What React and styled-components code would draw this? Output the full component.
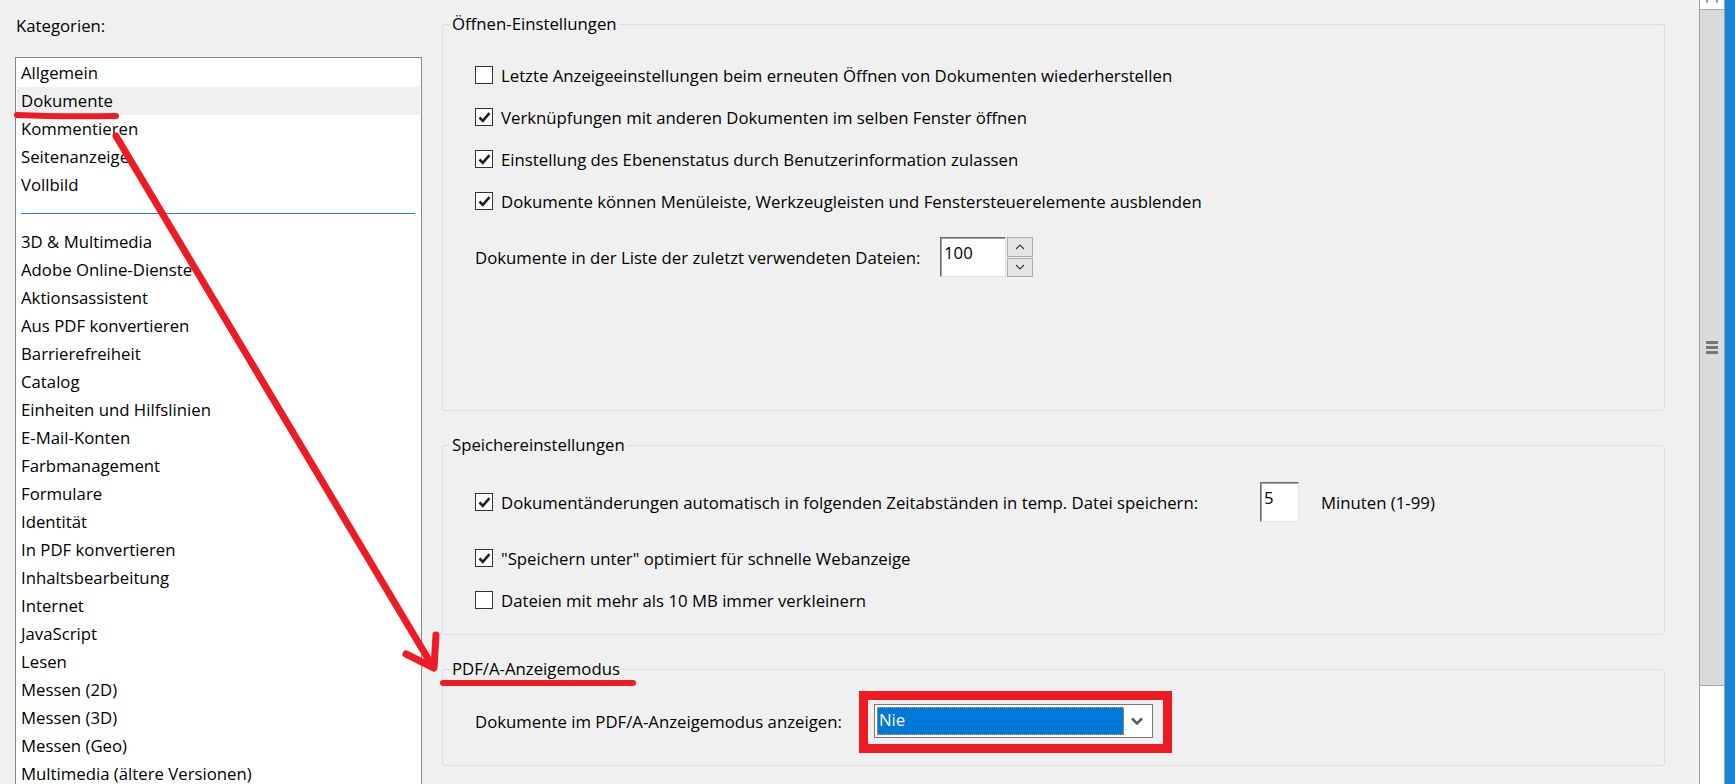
import React from 'react'
import styled, { createGlobalStyle } from 'styled-components'

const GlobalStyle = createGlobalStyle`
  html, body {
    margin: 0;
    padding: 0;
    overflow: hidden;
  }
  body {
    background: #f0f0f0;
    font-family: "Segoe UI", "Open Sans", "Noto Sans", sans-serif;
    font-size: 16.75px;
    color: #000;
  }
`

const Window = styled.div`
  position: relative;
  display: flex;
  width: 1735px;
  height: 784px;
  overflow: hidden;
  background: #f0f0f0;
`

/* left column: category list */
const Sidebar = styled.div`
  flex: none;
  width: 422px;
  padding: 14px 0 0 15px;
  box-sizing: border-box;
  display: flex;
  flex-direction: column;
`

const SidebarLabel = styled.div`
  height: 24px;
  line-height: 24px;
  padding-left: 1px;
  margin-bottom: 19px;
`

const CategoryList = styled.ul`
  flex: 1;
  min-height: 0;
  margin: 0;
  padding: 1px 1px 0;
  list-style: none;
  background: #fff;
  border: 1px solid #828790;
  border-bottom: none;
  overflow: hidden;
`

const Category = styled.li`
  height: 28px;
  line-height: 28px;
  padding-left: 4px;
  white-space: nowrap;
  background: ${p => (p.$selected ? '#f0f0f0' : 'transparent')};
`

const Divider = styled.li`
  height: 29px;
  display: flex;
  align-items: center;
  padding: 0 5px 0 4px;

  &::after {
    content: '';
    flex: 1;
    height: 1px;
    background: #2f7bc4;
  }
`

/* right column: option groups */
const Settings = styled.div`
  flex: 1;
  min-width: 0;
  padding: 12px 34px 0 20px;
  display: flex;
  flex-direction: column;
  gap: 22px;
`

const GroupBox = styled.fieldset`
  margin: 0;
  padding: 0;
  min-width: 0;
  height: ${p => p.$height}px;
  box-sizing: border-box;
  border: 1px solid #d5dfe5;
  border-radius: 3px;
`

const GroupTitle = styled.legend`
  margin-left: 7px;
  padding: 0 2px;
  line-height: 24px;
`

const GroupBody = styled.div`
  padding: ${p => p.$top}px 0 0 32px;
  display: flex;
  flex-direction: column;
`

const Row = styled.div`
  display: flex;
  align-items: center;
  height: 42px;
  margin-top: ${p => p.$space || 0}px;
  white-space: nowrap;
`

const Box = styled.span`
  flex: none;
  width: 18px;
  height: 18px;
  box-sizing: border-box;
  margin-right: 8px;
  border: 1px solid #333;
  background: #fff;
  display: inline-flex;
  align-items: center;
  justify-content: center;
`

const FieldLabel = styled.span`
  flex: none;
  width: ${p => p.$width}px;
`

const NumberField = styled.div`
  flex: none;
  width: ${p => p.$width}px;
  height: 40px;
  box-sizing: border-box;
  padding: 1px 3px;
  line-height: 28px;
  background: #fff;
  border: 1px solid;
  border-color: #6d6d6d #e3e3e3 #e3e3e3 #6d6d6d;
  box-shadow: inset 1px 1px 0 #a0a0a0;
`

const Spin = styled.div`
  flex: none;
  display: flex;
  flex-direction: column;
  gap: 1px;
  height: 40px;
  margin-left: 1px;
`

const SpinButton = styled.div`
  width: 26px;
  flex: 1;
  box-sizing: border-box;
  border: 1px solid #adadad;
  background: #e5e5e5;
  display: flex;
  align-items: center;
  justify-content: center;
`

const Unit = styled.span`
  margin-left: 22px;
`

const Select = styled.div`
  flex: none;
  width: 279px;
  height: 34px;
  box-sizing: border-box;
  padding: 2px;
  border: 1px solid #7a7a7a;
  background: #fff;
  display: flex;
  align-items: stretch;
`

const SelectValue = styled.div`
  width: 247px;
  box-sizing: border-box;
  padding-left: 2px;
  line-height: 26px;
  color: #fff;
  background: #0078d7;
  outline: 1px dotted #f0a040;
  outline-offset: -1px;
`

const SelectArrow = styled.div`
  flex: 1;
  display: flex;
  align-items: center;
  justify-content: center;
`

/* scrollbar and window frame on the far right */
const ScrollBar = styled.div`
  flex: none;
  width: 26px;
  box-sizing: border-box;
  border-left: 1px solid #a0a0a0;
  border-right: 1px solid #a0a0a0;
  background: #fff;
  display: flex;
  flex-direction: column;
`

const ScrollButton = styled.div`
  height: 9px;
  display: flex;
  justify-content: center;
  align-items: flex-start;
`

const ScrollThumb = styled.div`
  height: 677px;
  box-sizing: border-box;
  background: #dadada;
  border-top: 1px solid #a8a8a8;
  border-bottom: 1px solid #a8a8a8;
  display: flex;
  align-items: center;
  justify-content: center;
`

const Grip = styled.div`
  width: 12px;
  height: 13px;
  background: repeating-linear-gradient(#777 0 3px, #dadada 3px 5px);
`

const FrameEdge = styled.div`
  flex: none;
  width: 10px;
  background: #1883d7;
`

const Markup = styled.svg`
  position: absolute;
  left: 0;
  top: 0;
  pointer-events: none;
`

const top = ['Allgemein', 'Dokumente', 'Kommentieren', 'Seitenanzeige', 'Vollbild']
const rest = [
  '3D & Multimedia',
  'Adobe Online-Dienste',
  'Aktionsassistent',
  'Aus PDF konvertieren',
  'Barrierefreiheit',
  'Catalog',
  'Einheiten und Hilfslinien',
  'E-Mail-Konten',
  'Farbmanagement',
  'Formulare',
  'Identität',
  'In PDF konvertieren',
  'Inhaltsbearbeitung',
  'Internet',
  'JavaScript',
  'Lesen',
  'Messen (2D)',
  'Messen (3D)',
  'Messen (Geo)',
  'Multimedia (ältere Versionen)'
]

const Check = () => (
  <svg width="13" height="12" viewBox="0 0 13 12">
    <path d="M1.5 6.5 L4.8 9.8 L11.5 2.2" fill="none" stroke="#1e1e1e" strokeWidth="2.6" />
  </svg>
)

const CheckBox = ({ checked, children, space }) => (
  <Row $space={space}>
    <Box>{checked && <Check />}</Box>
    {children}
  </Row>
)

const Chevron = ({ up }) => (
  <svg width="10" height="6" viewBox="0 0 10 6">
    <path d={up ? 'M1 5 L5 1 L9 5' : 'M1 1 L5 5 L9 1'} fill="none" stroke="#333" strokeWidth="1.1" />
  </svg>
)

export default function App() {
  return (
    <Window>
      <GlobalStyle />
      <Sidebar>
        <SidebarLabel>Kategorien:</SidebarLabel>
        <CategoryList>
          {top.map(name => (
            <Category key={name} $selected={name === 'Dokumente'}>{name}</Category>
          ))}
          <Divider />
          {rest.map(name => (
            <Category key={name}>{name}</Category>
          ))}
        </CategoryList>
      </Sidebar>

      <Settings>
        <GroupBox $height={399}>
          <GroupTitle>Öffnen-Einstellungen</GroupTitle>
          <GroupBody $top={18}>
            <CheckBox>Letzte Anzeigeeinstellungen beim erneuten Öffnen von Dokumenten wiederherstellen</CheckBox>
            <CheckBox checked>Verknüpfungen mit anderen Dokumenten im selben Fenster öffnen</CheckBox>
            <CheckBox checked>Einstellung des Ebenenstatus durch Benutzerinformation zulassen</CheckBox>
            <CheckBox checked>Dokumente können Menüleiste, Werkzeugleisten und Fenstersteuerelemente ausblenden</CheckBox>
            <Row $space={14}>
              <FieldLabel $width={465}>Dokumente in der Liste der zuletzt verwendeten Dateien:</FieldLabel>
              <NumberField $width={66}>100</NumberField>
              <Spin>
                <SpinButton><Chevron up /></SpinButton>
                <SpinButton><Chevron /></SpinButton>
              </Spin>
            </Row>
          </GroupBody>
        </GroupBox>

        <GroupBox $height={202}>
          <GroupTitle>Speichereinstellungen</GroupTitle>
          <GroupBody $top={24}>
            <CheckBox checked>
              <FieldLabel $width={759}>Dokumentänderungen automatisch in folgenden Zeitabständen in temp. Datei speichern:</FieldLabel>
              <NumberField $width={39}>5</NumberField>
              <Unit>Minuten (1-99)</Unit>
            </CheckBox>
            <CheckBox checked space={14}>"Speichern unter" optimiert für schnelle Webanzeige</CheckBox>
            <CheckBox>Dateien mit mehr als 10 MB immer verkleinern</CheckBox>
          </GroupBody>
        </GroupBox>

        <GroupBox $height={109}>
          <GroupTitle>PDF/A-Anzeigemodus</GroupTitle>
          <GroupBody $top={19}>
            <Row>
              <FieldLabel $width={399}>Dokumente im PDF/A-Anzeigemodus anzeigen:</FieldLabel>
              <Select>
                <SelectValue>Nie</SelectValue>
                <SelectArrow>
                  <svg width="12" height="8" viewBox="0 0 12 8">
                    <path d="M1 1.5 L6 6.5 L11 1.5" fill="none" stroke="#606060" strokeWidth="2.6" />
                  </svg>
                </SelectArrow>
              </Select>
            </Row>
          </GroupBody>
        </GroupBox>
      </Settings>

      <ScrollBar>
        <ScrollButton>
          <svg width="12" height="4" viewBox="0 0 12 4">
            <path d="M1 0 L1 2 L2 2 M11 0 L11 2 L10 2" fill="none" stroke="#606060" strokeWidth="1.2" />
          </svg>
        </ScrollButton>
        <ScrollThumb>
          <Grip />
        </ScrollThumb>
      </ScrollBar>
      <FrameEdge />

      {/* red hand-drawn annotations */}
      <Markup width="1735" height="784" viewBox="0 0 1735 784">
        <g fill="none" stroke="#ed1c24" strokeLinecap="round" strokeLinejoin="round">
          <path d="M17 115 Q60 117 116 116" strokeWidth="6" />
          <path d="M116 136 L433 667" strokeWidth="7" />
          <path d="M406 654 L434 668 L436 635" strokeWidth="7" />
          <path d="M443 683 L633 683" strokeWidth="6" />
        </g>
        <rect x="863.5" y="695.5" width="304" height="53" fill="none" stroke="#ed1c24" strokeWidth="9" />
      </Markup>
    </Window>
  )
}
